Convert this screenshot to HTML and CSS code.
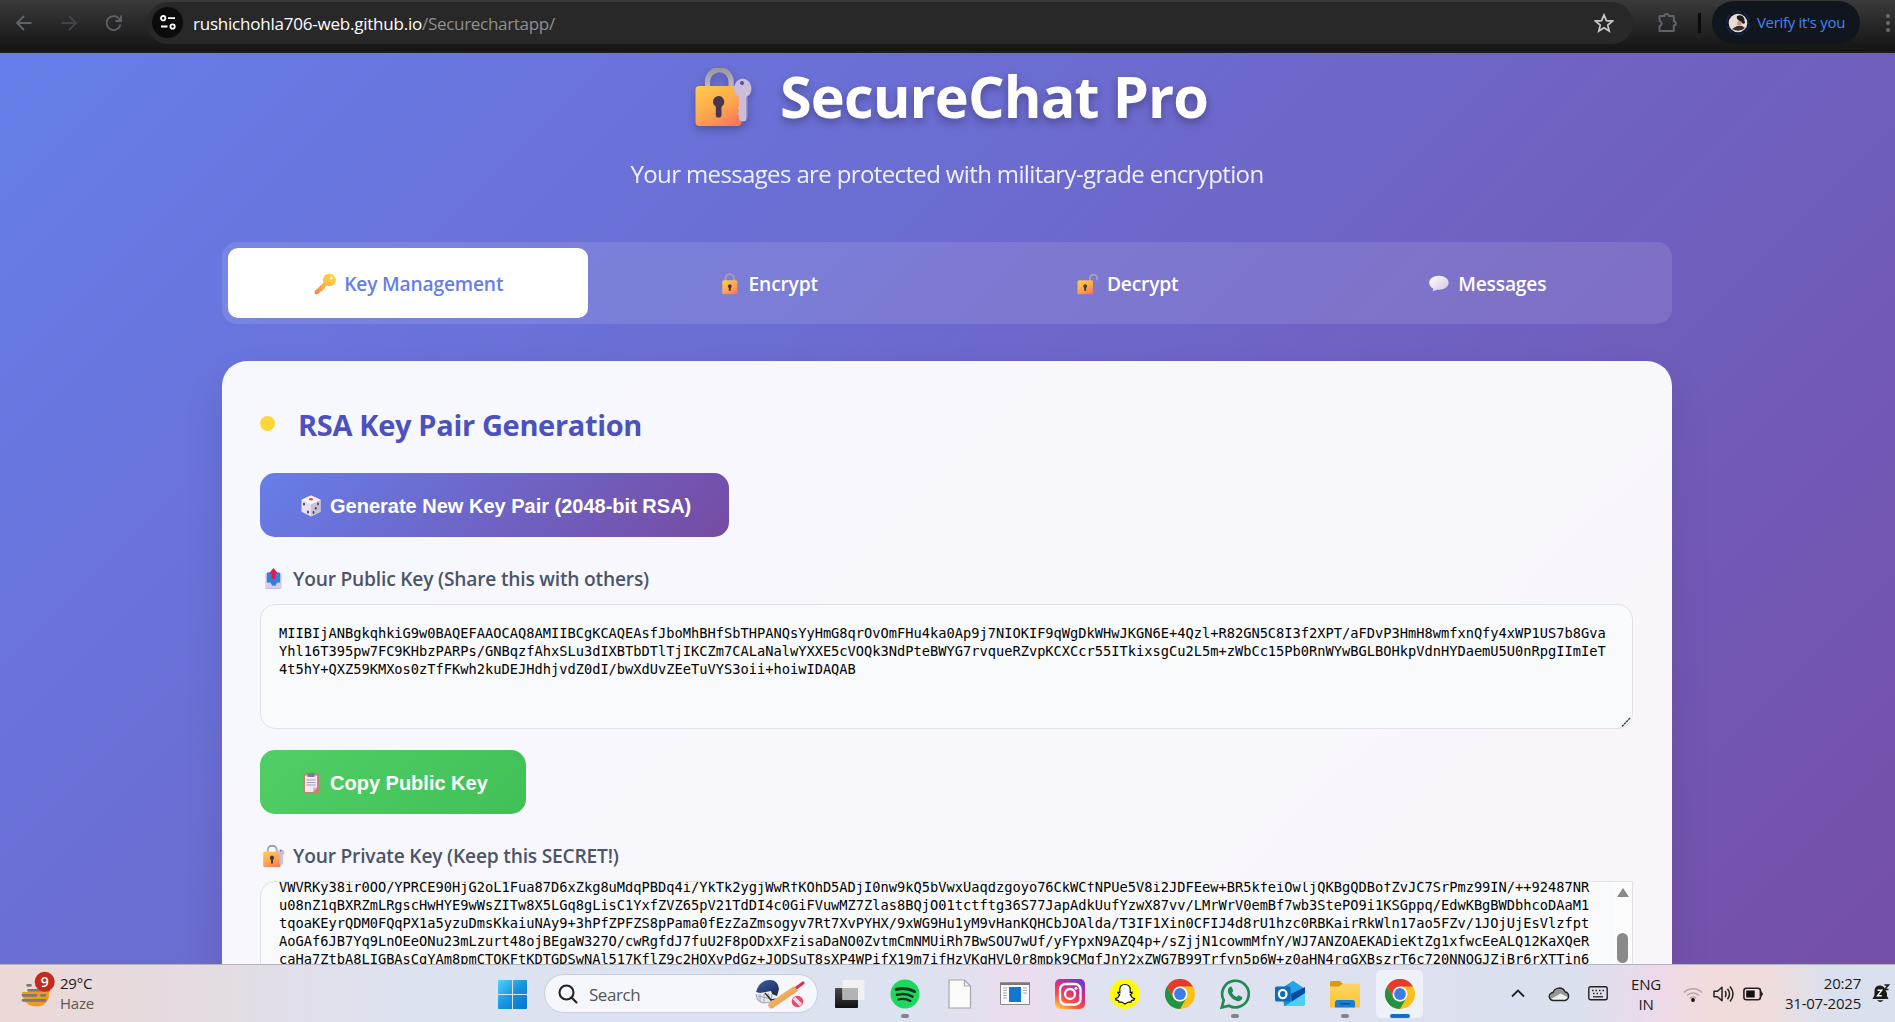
FILE: index.html
```html
<!DOCTYPE html>
<html lang="en">
<head>
<meta charset="utf-8">
<title>SecureChat Pro</title>
<link rel="stylesheet" href="styles.css">
</head>
<body>
<svg class="sprite" aria-hidden="true">
  <defs>
    <linearGradient id="gold" x1="0.2" y1="0" x2="0.8" y2="1"><stop offset="0" stop-color="#ffc84a"/><stop offset="0.55" stop-color="#fda64c"/><stop offset="1" stop-color="#f9775a"/></linearGradient>
    <linearGradient id="steel" x1="0" y1="0" x2="0" y2="1"><stop offset="0" stop-color="#9a9a9f"/><stop offset="1" stop-color="#c3b6cc"/></linearGradient>
    <linearGradient id="pearl" x1="0" y1="0" x2="1" y2="1"><stop offset="0" stop-color="#ffffff"/><stop offset="1" stop-color="#d5c4e2"/></linearGradient>
    <linearGradient id="keyfill" x1="1" y1="0" x2="0" y2="1"><stop offset="0" stop-color="#ffd944"/><stop offset="0.500" stop-color="#fdbb45"/><stop offset="1" stop-color="#f27c56"/></linearGradient>
    <linearGradient id="win" x1="0" y1="0" x2="1" y2="1"><stop offset="0" stop-color="#4fd4ff"/><stop offset="0.5" stop-color="#1a93dc"/><stop offset="1" stop-color="#0472cf"/></linearGradient>
    <linearGradient id="insta" x1="0.2" y1="1" x2="0.8" y2="0"><stop offset="0" stop-color="#ffc250"/><stop offset="0.3" stop-color="#f9503f"/><stop offset="0.6" stop-color="#d62f86"/><stop offset="1" stop-color="#6a3cc8"/></linearGradient>
    <linearGradient id="folder" x1="0" y1="0" x2="0" y2="1"><stop offset="0" stop-color="#ffd766"/><stop offset="1" stop-color="#fdc231"/></linearGradient>
    <linearGradient id="wood" x1="0" y1="0" x2="1" y2="1"><stop offset="0" stop-color="#ffce7d"/><stop offset="1" stop-color="#e08a3d"/></linearGradient>
    <linearGradient id="navy" x1="0" y1="0" x2="1" y2="1"><stop offset="0" stop-color="#4261a5"/><stop offset="1" stop-color="#142553"/></linearGradient>
    <linearGradient id="dark" x1="0" y1="0" x2="0" y2="1"><stop offset="0" stop-color="#4a4a4a"/><stop offset="1" stop-color="#111"/></linearGradient>
    <symbol id="lock-key" viewBox="0 0 58 58">
      <path d="M12.5 20v-6.500a11.800 11.800 0 0 1 23.600 0V20" fill="none" stroke="url(#steel)" stroke-width="5.200"/>
      <rect x="0.500" y="18" width="46" height="40" rx="4" fill="url(#gold)"/>
      <path d="M23.500 28a5.800 5.800 0 0 1 3 10.700v8a2.800 2.800 0 0 1-5.700 0v-8A5.800 5.800 0 0 1 23.500 28z" fill="#4a3550"/>
      <path d="M47.500 10.500a10 10 0 0 1 4 18.500v21.500q0 3-3.500 3t-4-3v-3l-1.500-1.500 1.500-2v-2l-1.500-2 1.500-1.500V29a10 10 0 0 1 3.500-18.500z" fill="#cbbddb"/>
      <path d="M52 29v21" stroke="#a898bd" stroke-width="1"/>
      <circle cx="47" cy="15" r="2" fill="#5b4c9c"/>
    </symbol>
    <symbol id="lock" viewBox="0 0 22 22">
      <path d="M6.500 8V5.500a4.200 4.200 0 0 1 8.400 0V8" fill="none" stroke="#aaa0b4" stroke-width="1.900"/>
      <rect x="3.300" y="7.300" width="15" height="14" rx="1.500" fill="url(#gold)"/>
      <path d="M10.800 11.200a2 2 0 0 1 1 3.700v2.800h-2v-2.800a2 2 0 0 1 1-3.700z" fill="#4a3550"/>
    </symbol>
    <symbol id="unlock" viewBox="0 0 22 22">
      <path d="M13 8V5.200a3.600 3.600 0 0 1 7.200 0v2" fill="none" stroke="#aaa0b4" stroke-width="1.900"/>
      <rect x="0.500" y="7.300" width="15.500" height="14" rx="1.500" fill="url(#gold)"/>
      <path d="M8.200 11.200a2 2 0 0 1 1 3.700v2.800h-2v-2.800a2 2 0 0 1 1-3.700z" fill="#4a3550"/>
    </symbol>
    <symbol id="key" viewBox="0 0 22 22">
      <path d="M15.500 0.700a6.200 6.200 0 1 1-2.500 11.800l-1.800 1.500-.3 1.800-1.900.2-.4 2-1.900.2-2.700 2.900q-2.500 1.200-3.200-.6l-.1-2.300 8.900-8.700A6.200 6.200 0 0 1 15.500.700z" fill="url(#keyfill)"/>
      <circle cx="17.300" cy="5" r="1.300" fill="#fff"/>
    </symbol>
    <symbol id="speech" viewBox="0 0 22 22">
      <path d="M11 2.800c5.500 0 9.600 2.900 9.600 7s-4.100 7-9.600 7l-2-.1-4.200 1.500.4-2.700C2.700 14.400 1.200 12.300 1.200 9.800c0-4.100 4.300-7 9.800-7z" fill="url(#pearl)"/>
    </symbol>
    <symbol id="die" viewBox="0 0 22 22">
      <path d="M11 .5l9.500 4.300v12L11 21.500 1.500 16.800v-12z" fill="#e6e0ec"/>
      <path d="M11 9.200l9.500-4.400v12L11 21.500z" fill="#c9c2d2"/>
      <path d="M11 .5l9.500 4.300L11 9.200 1.500 4.800z" fill="#f7f4fa"/>
      <ellipse cx="11" cy="4.300" rx="2" ry="1.200" fill="#e8475c"/>
      <g fill="#493a63"><ellipse cx="4" cy="9" rx="1" ry="1.500"/><ellipse cx="8" cy="17" rx="1" ry="1.500"/><ellipse cx="18" cy="9" rx=".9" ry="1.400"/><ellipse cx="15.800" cy="13.300" rx=".9" ry="1.400"/><ellipse cx="13.500" cy="17.500" rx=".9" ry="1.400"/></g>
    </symbol>
    <symbol id="outbox" viewBox="0 0 22 22">
      <rect x="2.500" y="5" width="16" height="16" rx="1.500" fill="#c7bbe0"/>
      <path d="M4 4.500h13v10h-3l-1.500 3H9l-1.500-3H4z" fill="#2b83dc"/>
      <path d="M3 15h4.500l1.500 3h4l1.500-3H18v5H3z" fill="#d9cfe9"/>
      <path d="M10.500 0l4.500 5.500h-2.700V11H8.700V5.500H6z" fill="#dc1b55"/>
    </symbol>
    <symbol id="clipboard" viewBox="0 0 22 22">
      <rect x="3" y="1.500" width="16" height="20" rx="1.500" fill="#c88370"/>
      <path d="M5 3.500h12v12l-4 4.500H5z" fill="#efe9f6"/>
      <path d="M13 20v-4.500h4z" fill="#c8b9dc"/>
      <path d="M7.500 1h7v4h-7z" fill="#85788d"/>
      <path d="M6.500 8h9M6.500 10.500h9M6.500 13h9" stroke="#a89cb5" stroke-width="1.100"/>
    </symbol>
    <symbol id="chrome" viewBox="0 0 30 30">
      <circle cx="15" cy="15" r="15" fill="#fbc116"/>
      <path d="M2 7.500A15 15 0 0 1 28 7.500H15L8.500 18.700z" fill="#e33b2e"/>
      <path d="M2 7.500A15 15 0 0 0 15 30l6.500-11.200A7.500 7.500 0 0 1 8.500 18.700z" fill="#229342"/>
      <circle cx="15" cy="15" r="7.500" fill="#fff"/><circle cx="15" cy="15" r="5.900" fill="#3b7de9"/>
    </symbol>
  </defs>
</svg>

<header class="browser">
  <nav class="browser-nav">
    <svg width="16" height="16" viewBox="0 0 16 16"><path d="M15.500 8H1.500M8 1L1 8l7 7" /></svg>
    <svg class="dim" width="16" height="16" viewBox="0 0 16 16"><path d="M.5 8h14M8 1l7 7-7 7" /></svg>
    <svg width="16" height="16" viewBox="0 0 16 16"><path d="M14.500 9.500A7 7 0 1 1 13 3.500l2 2.300M15 .500v5.500H9.500" /></svg>
  </nav>
  <div class="omnibox">
    <span class="site-info"><svg width="16" height="15" viewBox="0 0 16 15" fill="none" stroke="#fff" stroke-width="1.800"><circle cx="3.200" cy="3.200" r="2.200"/><path d="M8 3.200h7M1 11.500h6.500"/><circle cx="12.600" cy="11.500" r="2.200"/></svg></span>
    <span class="url">rushichohla706-web.github.io<span class="path">/Securechartapp/</span></span>
    <svg class="star" width="20" height="20" viewBox="0 0 20 20"><path d="M10 2l2.400 5.600 6 .5-4.600 4 1.400 5.900-5.200-3.200L4.800 18l1.400-5.900-4.600-4 6-.5z" fill="none" stroke="#c7c7c7" stroke-width="1.800"/></svg>
  </div>
  <svg class="puzzle" width="21" height="21" viewBox="0 0 21 21"><path d="M2.500 4h4.800q.3-2 2.300-2t2.300 2h4.900v5.200q2 .3 2 2.200t-2 2.200V19H2.500v-4.700a2.800 2.800 0 0 0 0-5.400z" fill="none" stroke="#5f6368" stroke-width="2" stroke-linejoin="round"/></svg>
  <span class="bar-divider"></span>
  <div class="profile">
    <svg width="26" height="26" viewBox="0 0 26 26"><circle cx="13" cy="13" r="11.500" fill="none" stroke="#0c2a57" stroke-width="1.500" stroke-dasharray="9 3"/><circle cx="13" cy="13" r="9.300" fill="#e8dcd6"/><path d="M12 6q5-2 7 2l1 5q-2 2-4-1l-3-2q-2-2-1-4z" fill="#1d1a1e"/><path d="M13 10l4 2-1 4-4-1z" fill="#c89883"/><path d="M7 19l5-3 5 0 3 2q-6 5-13 1z" fill="#3a2c30"/></svg>
    <span>Verify it's you</span>
  </div>
  <svg class="kebab" width="6" height="20" viewBox="0 0 6 20" fill="#6a6d71"><circle cx="3" cy="3" r="2"/><circle cx="3" cy="10" r="2"/><circle cx="3" cy="17" r="2"/></svg>
</header>

<main class="page">
  <h1 class="title"><svg class="title-icon"><use href="#lock-key"/></svg><span>SecureChat Pro</span></h1>
  <p class="subtitle">Your messages are protected with military-grade encryption</p>

  <div class="tabs">
    <button class="tab active"><svg class="emoji"><use href="#key"/></svg><span>Key Management</span></button>
    <button class="tab"><svg class="emoji"><use href="#lock"/></svg><span>Encrypt</span></button>
    <button class="tab"><svg class="emoji"><use href="#unlock"/></svg><span>Decrypt</span></button>
    <button class="tab"><svg class="emoji"><use href="#speech"/></svg><span>Messages</span></button>
  </div>

  <section class="card">
    <h2 class="section-title"><span class="dot"></span><span>RSA Key Pair Generation</span></h2>
    <button class="btn btn-primary"><svg class="emoji"><use href="#die"/></svg><span>Generate New Key Pair (2048-bit RSA)</span></button>
    <div class="field-label"><svg class="emoji"><use href="#outbox"/></svg><span>Your Public Key (Share this with others)</span></div>
    <div class="keybox"><pre>MIIBIjANBgkqhkiG9w0BAQEFAAOCAQ8AMIIBCgKCAQEAsfJboMhBHfSbTHPANQsYyHmG8qrOvOmFHu4ka0Ap9j7NIOKIF9qWgDkWHwJKGN6E+4Qzl+R82GN5C8I3f2XPT/aFDvP3HmH8wmfxnQfy4xWP1US7b8Gva
Yhl16T395pw7FC9KHbzPARPs/GNBqzfAhxSLu3dIXBTbDTlTjIKCZm7CALaNalwYXXE5cVOQk3NdPteBWYG7rvqueRZvpKCXCcr55ITkixsgCu2L5m+zWbCc15Pb0RnWYwBGLBOHkpVdnHYDaemU5U0nRpgIImIeT
4t5hY+QXZ59KMXos0zTfFKwh2kuDEJHdhjvdZ0dI/bwXdUvZEeTuVYS3oii+hoiwIDAQAB</pre><svg class="grip" width="10" height="10" viewBox="0 0 10 10"><path d="M1 9.500L9 1M5.500 9.500L9 6" stroke="#444" stroke-width="1.500" stroke-dasharray="2.500 .600"/></svg></div>
    <button class="btn btn-success"><svg class="emoji"><use href="#clipboard"/></svg><span>Copy Public Key</span></button>
    <div class="field-label"><svg class="emoji"><use href="#lock-key"/></svg><span>Your Private Key (Keep this SECRET!)</span></div>
    <div class="keybox scrolled"><pre>VWVRKy38ir0OO/YPRCE90HjG2oL1Fua87D6xZkg8uMdqPBDq4i/YkTk2ygjWwRfKOhD5ADjI0nw9kQ5bVwxUaqdzgoyo76CkWCfNPUe5V8i2JDFEew+BR5kfeiOwljQKBgQDBofZvJC7SrPmz99IN/++92487NR
u08nZ1qBXRZmLRgscHwHYE9wWsZITw8X5LGq8gLisC1YxfZVZ65pV21TdDI4c0GiFVuwMZ7Zlas8BQjO01tctftg36S77JapAdkUufYzwX87vv/LMrWrV0emBf7wb3StePO9i1KSGppq/EdwKBgBWDbhcoDAaM1
tqoaKEyrQDM0FQqPX1a5yzuDmsKkaiuNAy9+3hPfZPFZS8pPama0fEzZaZmsogyv7Rt7XvPYHX/9xWG9Hu1yM9vHanKQHCbJOAlda/T3IF1Xin0CFIJ4d8rU1hzc0RBKairRkWln17ao5FZv/1JOjUjEsVlzfpt
AoGAf6JB7Yq9LnOEeONu23mLzurt48ojBEgaW327O/cwRgfdJ7fuU2F8pODxXFzisaDaNO0ZvtmCmNMUiRh7BwSOU7wUf/yFYpxN9AZQ4p+/sZjjN1cowmMfnY/WJ7ANZOAEKADieKtZg1xfwcEeALQ12KaXQeR
caHa7ZtbA8LIGBAsCgYAm8pmCTOKFtKDTGDSwNAl517KflZ9c2HOXvPdGz+JODSuT8sXP4WPifX19m7ifHzVKqHVL0r8mpk9CMqfJnY2xZWG7B99Trfyn5p6W+z0aHN4rqGXBszrT6c720NNOGJZjBr6rXTTin6</pre><div class="scrollbar"><span class="arrow-up"></span><span class="thumb"></span></div></div>
  </section>
</main>

<footer class="taskbar">
  <div class="weather">
    <svg width="36" height="38" viewBox="0 0 36 38"><path d="M2 21H29Q30 31 22 34.500Q15 37 8.500 33.500Q2.500 29.500 2 21z" fill="#f29a1e"/><path d="M7.500 14.300h3M8.500 19.300H29M3 24.300h13M21.500 24.300h3.500M3 29.300h22" stroke="#7b7a76" stroke-width="2.800" stroke-linecap="round"/><circle cx="24.700" cy="10.700" r="10" fill="#c42b1c"/><text x="24.700" y="15.700" text-anchor="middle" class="badge-text">9</text></svg>
    <div class="weather-text"><span>29°C</span><span class="muted">Haze</span></div>
  </div>
  <div class="dock">
    <svg class="start" width="29" height="29" viewBox="0 0 29 29" fill="url(#win)"><path d="M1 0h13v14H0V1q0-1 1-1zM15 0h13q1 0 1 1v13H15zM0 15h14v14H1q-1 0-1-1zM15 15h14v13q0 1-1 1H15z"/></svg>
    <div class="search">
      <svg width="20" height="20" viewBox="0 0 20 20" fill="none" stroke="#222" stroke-width="2.100"><circle cx="8.500" cy="8.500" r="7"/><path d="M13.500 13.500l5 5" stroke-linecap="round"/></svg>
      <span class="search-text">Search</span>
      <svg width="50" height="32" viewBox="0 0 50 32"><path d="M1 16q1 8 8 9l7-1 1-8" fill="#e6e8ee" stroke="#a3a7b0" stroke-width="1.200"/><path d="M3 18l13 3M5 16v7M9 16v9M13 15l3 9" stroke="#a5a8b2" fill="none"/><path d="M1 14Q4 2 15 2q8 0 9 9l-2 7-5-2-1-3-11 2z" fill="url(#navy)"/><path d="M10 15l6 7 6-1" fill="none" stroke="#252a38" stroke-width="1.500"/><path d="M40 11l8-6" stroke="#d63b4b" stroke-width="3.200" stroke-linecap="round"/><path d="M14 25L39 8l4 5-25 17q-2 1.500-4-1t0-4z" fill="url(#wood)"/><circle cx="42.500" cy="23.500" r="5.800" fill="#ee4a68"/><path d="M39 20l7 7" stroke="#fbd3ee" stroke-width="3.500"/></svg>
    </div>
    <div class="app"><svg width="30" height="30" viewBox="0 0 30 30"><rect x="0" y="9" width="23" height="20" rx="1" fill="url(#dark)"/><rect x="7.500" y="1" width="22" height="20" rx="1" fill="#f2f2f2" opacity=".93"/><path d="M7.500 9H23v12H7.500z" fill="#b3b3b3"/></svg></div>
    <div class="app running"><svg width="30" height="30" viewBox="0 0 30 30"><circle cx="15" cy="15" r="14.500" fill="#1ed760"/><g fill="none" stroke="#12301d" stroke-linecap="round"><path d="M6 10.500q10-2.500 18.500 2" stroke-width="3"/><path d="M7 15.800q8.500-2.300 15.500 1.800" stroke-width="2.500"/><path d="M8 20.500q7-1.800 12.500 1.500" stroke-width="2.100"/></g></svg></div>
    <div class="app"><svg width="30" height="30" viewBox="0 0 30 30"><path d="M4 1h15.500l6 6v22H4z" fill="#fafafa" stroke="#a6a6a6" stroke-width="1.200"/><path d="M19.500 1v6h6" fill="none" stroke="#a6a6a6" stroke-width="1.200"/></svg></div>
    <div class="app"><svg width="30" height="30" viewBox="0 0 30 30"><path d="M.5 4h29v21.500H.500z" fill="#fafafa" stroke="#888" stroke-width="1"/><path d="M0 3.500h30v2.500H0z" fill="#777"/><path d="M9 8h12v15H9z" fill="#1377d0"/><path d="M3 9h4M3 11.500h4M3 14h4M3 16.500h4M3 19h4M23 9h4M23 11.500h4M23 14h4" stroke="#aaa" stroke-width="1.100"/></svg></div>
    <div class="app"><svg width="30" height="30" viewBox="0 0 30 30"><rect width="30" height="30" rx="5" fill="url(#insta)"/><g fill="none" stroke="#fff" stroke-width="2.300"><rect x="5" y="5" width="20.500" height="20.500" rx="5.500"/><circle cx="15" cy="15" r="5"/></g><circle cx="21" cy="9.300" r="1.500" fill="#fff"/></svg></div>
    <div class="app"><svg width="30" height="30" viewBox="0 0 30 30"><circle cx="15" cy="15" r="15" fill="#fffc00"/><path d="M15 5.500c3.500 0 5.300 2.500 5.300 5.500l-.2 2.500 2-.3-.2 1.300-1.600 1.200c.8 2 2 3.400 4.200 4l-.5 1.200-2.500.7-.5 1.500h-2.700L15 25l-3.300-1.900H9l-.5-1.500-2.500-.7-.5-1.200c2.200-.6 3.400-2 4.200-4l-1.600-1.200-.2-1.300 2 .3L9.700 11c0-3 1.800-5.500 5.300-5.500z" fill="#fff" stroke="#111" stroke-width="1.200"/></svg></div>
    <div class="app"><svg width="30" height="30"><use href="#chrome"/></svg></div>
    <div class="app running"><svg width="30" height="30" viewBox="0 0 30 30"><path d="M1.700 28.500l2-7.200A13.300 13.300 0 1 1 9 26.700z" fill="none" stroke="#1f8a53" stroke-width="2.700"/><path d="M9.500 8l2-.5 1.800 4.200-1.300 2c1 2 2.500 3.400 4.700 4.400l1.800-1.800 3.900 2c0 3-2.700 4.400-5.200 3.700C13 21 9.300 17.500 8 13c-.4-2 .3-4 1.500-5z" fill="#1f8a53"/></svg></div>
    <div class="app"><svg width="30" height="30" viewBox="0 0 30 30"><path d="M7 9l11-7 12 8v14q0 3-3 3H9z" fill="#1b8fdd"/><path d="M10 10l8-8 12 8-10 6z" fill="#27a3e8"/><path d="M16 15l14-7v7l-13 8z" fill="#0b49a5"/><path d="M10 27l20-13v10q0 3-3 3z" fill="#4dd0f7"/><rect y="7.500" width="15.500" height="15" rx="1.500" fill="#0f6cbd"/><ellipse cx="7.700" cy="15" rx="3.800" ry="4.200" fill="none" stroke="#fff" stroke-width="2.200"/></svg></div>
    <div class="app running"><svg width="30" height="30" viewBox="0 0 30 30"><path d="M0 3.500q0-1.500 1.500-1.500H10l3 3v5H0z" fill="#d99a06"/><path d="M0 7.500h9l4-3h15.500q1.500 0 1.500 1.500v22.500H0z" fill="url(#folder)"/><path d="M5 28.500v-5q0-2.500 2.500-2.500h15q2.500 0 2.500 2.500v5z" fill="#1a7fd0"/><path d="M10.500 24.700h9" stroke="#0b4d92" stroke-width="1.600" stroke-linecap="round"/></svg></div>
    <div class="app running current"><svg width="30" height="30"><use href="#chrome"/></svg></div>
  </div>
  <div class="tray">
    <svg width="14" height="9" viewBox="0 0 14 9"><path d="M1 7.500l6-6 6 6" fill="none" stroke="#222" stroke-width="1.800"/></svg>
    <svg class="cloud" width="22" height="16" viewBox="0 0 22 16"><path d="M5.500 14.500a4 4 0 0 1-.5-8A6.500 6.500 0 0 1 17 5.700a4.500 4.500 0 0 1 0 8.800z" fill="#979797"/><path d="M3 13l9.500-5.500 8 4q-1 2.300-3.500 2.500H5.500Q4 14 3 13z" fill="#efefef"/><path d="M5.500 14.500a4 4 0 0 1-.5-8A6.500 6.500 0 0 1 17 5.700a4.500 4.500 0 0 1 0 8.800z" fill="none" stroke="#222" stroke-width="1.400"/></svg>
    <svg class="kbd" width="20" height="15" viewBox="0 0 20 15"><rect x=".8" y=".8" width="18.400" height="13" rx="1.800" fill="none" stroke="#222" stroke-width="1.400"/><path d="M4 4.500h12M5 7.500h10" stroke="#222" stroke-width="1.500" stroke-dasharray="1.500 2"/><path d="M5 10.800h10" stroke="#222" stroke-width="1.300"/></svg>
    <div class="lang"><span>ENG</span><span>IN</span></div>
    <svg class="wifi" width="20" height="16" viewBox="0 0 20 16" fill="none" stroke="#b3a5a5" stroke-width="1.500"><path d="M1 6.500a12.500 12.500 0 0 1 18 0M4 9.500a8.500 8.500 0 0 1 12 0M6.800 12.300a4.500 4.500 0 0 1 6.400 0"/><circle cx="10" cy="14" r="1.900" fill="#111" stroke="none"/></svg>
    <svg class="vol" width="21" height="18" viewBox="0 0 21 18" fill="none" stroke="#222" stroke-width="1.500"><path d="M1 6.300h3.500L9 2.200v13.600l-4.500-4.100H1zM12 6q2 3 0 6M14.500 3.800q4 5.200 0 10.400M17 1.500q6 7.500 0 15" stroke-linejoin="round"/></svg>
    <svg class="bat" width="21" height="14" viewBox="0 0 21 14"><rect x=".9" y="1.200" width="16.500" height="11.600" rx="2.500" fill="none" stroke="#222" stroke-width="1.600"/><rect x="3.200" y="3.500" width="8.500" height="7" fill="#111"/><path d="M18 4.500q3 2.500 0 5z" fill="#222" stroke="#222"/></svg>
    <div class="clock"><span>20:27</span><span>31-07-2025</span></div>
    <svg class="bell" width="18" height="19" viewBox="0 0 18 19"><path d="M2.500 11V7A5.500 5.500 0 0 1 12 3.200l3 6V12l1.500 3H.500z" fill="#1b1b1b"/><path d="M5 16.200q3.300 3.500 6.500 0z" fill="#1b1b1b"/><path d="M12.500 1h4l-4 4.500h4" stroke="#1b1b1b" fill="none" stroke-width="1.500"/><path d="M5.500 6.300h4.200l-4.200 5.500h4.200" stroke="#fff" fill="none" stroke-width="1.400"/></svg>
  </div>
</footer>
</body>
</html>
```
FILE: styles.css
```css
* { box-sizing: border-box; }
body { margin: 0; width: 1895px; height: 1022px; overflow: hidden; display: flex; flex-direction: column; font-family: "Open Sans", "Noto Sans", sans-serif; }
button { border: 0; background: none; font: inherit; color: inherit; padding: 0; margin: 0; letter-spacing: inherit; }
h1, h2, p, pre { margin: 0; }
span { white-space: nowrap; }
svg { display: block; flex: none; }
.sprite { position: absolute; width: 0; height: 0; }
.emoji { width: 22px; height: 22px; }

/* Browser toolbar */
.browser { height: 53px; flex: none; background: linear-gradient(#3a3a3a, #262626 50%, #151515 95%, #202020); display: flex; align-items: flex-start; }
.browser-nav { display: flex; gap: 29px; padding: 15px 26px 0 16px; width: 147px; flex: none; }
.browser-nav svg { fill: none; stroke: #5f6368; stroke-width: 1.8; }
.browser-nav .dim { stroke: #404347; }
.omnibox { width: 1486px; height: 42px; margin-top: 2px; border-radius: 21px; background: #282828; display: flex; align-items: center; padding: 0 19px 0 5px; flex: none; }
.site-info { width: 31px; height: 31px; margin-top: -1px; border-radius: 50%; background: #0c0c0c; display: flex; align-items: center; justify-content: center; }
.url { margin-left: 10px; flex: 1; font-size: 17px; letter-spacing: -0.22px; color: #fff; }
.path { color: #8f8f8f; letter-spacing: -0.3px; }
.puzzle { margin: 12px 0 0 24px; }
.bar-divider { width: 3px; height: 20px; background: #0b0b0b; margin: 13px 11px 0 20px; }
.profile { width: 148px; height: 43px; margin-top: 1px; border-radius: 22px; background: #11151d; display: flex; align-items: center; padding-left: 13px; gap: 6px; font-size: 15px; letter-spacing: -0.33px; color: #4285f0; flex: none; }
.profile span { margin-top: -1px; }
.kebab { margin: 13px 0 0 25px; }

/* Page */
.page { height: 911px; flex: none; overflow: hidden; padding: 0 223px 0 222px; background: linear-gradient(135deg, #667eea 0%, #764ba2 100%) 0 0 / 100% 1150px no-repeat; color: #fff; }
.title { height: 86px; display: flex; align-items: center; padding-left: 472px; gap: 26px; font-size: 57.6px; font-weight: 700; line-height: 86px; letter-spacing: -0.91px; text-shadow: 0 4px 8px rgba(0, 0, 0, 0.3); }
.title-icon { width: 60px; height: 58px; margin-top: 1px; filter: drop-shadow(0 4px 4px rgba(0, 0, 0, 0.25)); }
.subtitle { margin: 18px 0 52px; height: 33px; line-height: 33px; font-size: 24px; letter-spacing: -0.63px; text-align: center; opacity: 0.9; }
.tabs { height: 82px; padding: 6px; border-radius: 15px; background: rgba(255, 255, 255, 0.11); display: grid; grid-template-columns: repeat(4, 1fr); }
.tab { display: flex; align-items: center; justify-content: center; gap: 8px; padding: 1px 0 0 2px; font-size: 19.2px; letter-spacing: -0.17px; font-weight: 600; border-radius: 10px; height: 70px; }
.tab.active { background: #fff; color: #667eea; }

/* Key card */
.card { margin-top: 37px; height: 700px; padding: 43px 39px 0 38px; border-radius: 25px; background: rgba(255, 255, 255, 0.95); box-shadow: 0 20px 40px rgba(0, 0, 0, 0.1); }
.section-title { height: 41px; margin-bottom: 28px; line-height: 41px; display: flex; align-items: center; gap: 23px; font-size: 29px; letter-spacing: -0.34px; font-weight: 700; color: #4c51bf; }
.dot { width: 15px; height: 15px; margin-top: -2px; border-radius: 50%; background: #ffd43b; }
.btn { height: 64px; border-radius: 15px; display: flex; align-items: center; gap: 8px; padding: 2px 0 0 40px; font-family: "Liberation Sans", Arial, sans-serif; font-size: 20px; font-weight: 700; color: #fff; }
.btn span { padding-top: 1px; }
.btn-primary { width: 469px; background: linear-gradient(135deg, #667eea, #764ba2); }
.btn-success { width: 266px; margin-top: 21px; background: linear-gradient(135deg, #51cf66, #40c057); }
.field-label { height: 25px; line-height: 25px; margin: 29px 0 13px; padding-left: 3px; display: flex; align-items: center; gap: 8px; font-size: 19.2px; letter-spacing: -0.2px; font-weight: 600; color: #4a5568; }
.keybox { height: 125px; position: relative; overflow: hidden; border: 1px solid #dfe3e8; border-radius: 15px; background: #f8fafb; padding: 19px 18px; color: #000; }
.keybox pre { font: 13.7px/18px "DejaVu Sans Mono", monospace; }
.keybox.scrolled { padding: 0 0 0 18px; display: flex; border-radius: 15px 0 0 15px; }
.keybox.scrolled pre { margin-top: -4px; flex: 1; }
.grip { position: absolute; right: 1px; bottom: 1px; }
.scrollbar { width: 19px; background: #fcfcfc; display: flex; flex-direction: column; align-items: center; }
.arrow-up { margin-top: 6px; border: 6px solid transparent; border-top: 0; border-bottom: 9px solid #8a8a8a; }
.thumb { margin-top: 36px; width: 11px; height: 30px; border-radius: 6px; background: #8a8a8a; }

/* Taskbar */
.taskbar { height: 58px; flex: none; border-top: 1px solid #b3b3bb; display: flex; font-size: 15px; letter-spacing: -0.22px; color: #1b1b1b; background: linear-gradient(90deg, #ecd9d6 0, #e6dade 150px, #dde2f0 400px, #dde2f0 930px, #ecdcee 1020px, #dfe2f0 1100px, #dbe0ee 1580px, #ecd9ea 1655px, #f2dcdb 1710px, #efdcdc 1770px, #dbe0ee 1830px, #dbe0ee 1895px); }
.weather { width: 499px; display: flex; padding: 6px 0 0 20px; gap: 4px; }
.weather-text { display: flex; flex-direction: column; line-height: 20px; padding-top: 2px; }
.muted { color: #5c5654; }
.badge-text { font: 600 14px "Open Sans", sans-serif; fill: #fff; }
.dock { width: 925px; display: flex; align-items: flex-start; }
.start { margin: 15px 17px 0 0; }
.search { width: 274px; height: 39px; margin: 9px 8px 0 0; border-radius: 20px; border: 1px solid #c9cedb; background: #f5f7fc; display: flex; align-items: center; padding: 0 12px 0 13px; flex: none; }
.search-text { margin-left: 11px; padding-top: 1px; flex: 1; font-size: 17px; letter-spacing: -0.45px; color: #555; }
.app { width: 47px; height: 48px; margin: 5px 8px 0 0; flex: none; display: flex; flex-direction: column; align-items: center; justify-content: space-between; padding-top: 9px; }
.running::after { content: ""; width: 8px; height: 4px; border-radius: 2px; background: #80838c; }
.current { background: #eff1f8; border-radius: 5px; }
.current::after { width: 20px; background: #0a6fd0; }
.tray { display: flex; align-items: center; flex: 1; padding: 0 5px 0 88px; }
.cloud { margin-left: 23px; }
.kbd { margin-left: 18px; }
.lang { margin-left: 23px; width: 30px; display: flex; flex-direction: column; align-items: center; line-height: 20px; }
.wifi { margin-left: 22px; }
.vol { margin-left: 10px; }
.bat { margin-left: 9px; }
.clock { margin-left: 19px; width: 78px; display: flex; flex-direction: column; align-items: flex-end; line-height: 20px; margin-top: -2px; }
.bell { margin-left: 11px; }
```
